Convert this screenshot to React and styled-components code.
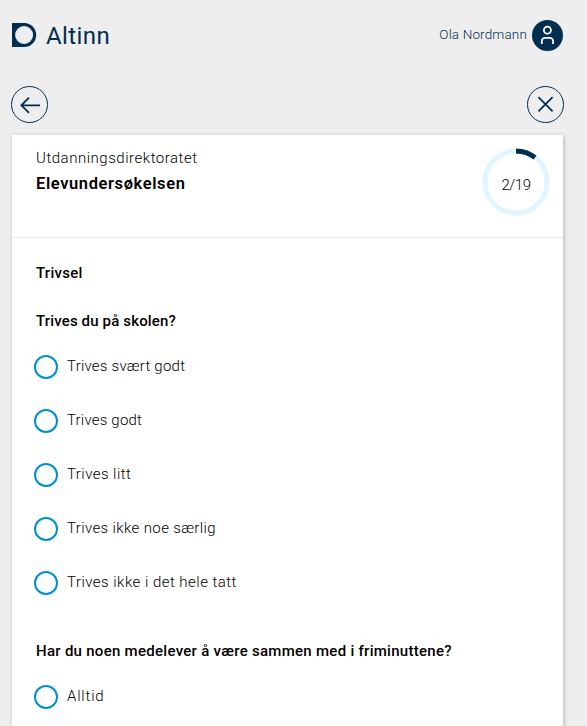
import React from 'react';
import styled, { createGlobalStyle } from 'styled-components';

const navy = '#022f51';

const GlobalStyle = createGlobalStyle`
  * { box-sizing: border-box; }
  html { overflow: hidden; }
  body { margin: 0; background: #eee; font-family: Roboto, "Liberation Sans", sans-serif; color: #000; }
  h1, h2, h3, p, fieldset { margin: 0; padding: 0; border: 0; }
  svg { display: block; flex: none; }
`;

const Page = styled.div`
  width: 587px;
  height: 726px;
  padding: 0 24px 0 12px;
  overflow: hidden;
`;

const TopBar = styled.header`
  display: flex;
  align-items: center;
  justify-content: space-between;
  height: 71px;
  color: ${navy};
`;

const Brand = styled.div`
  display: flex;
  align-items: center;
  gap: 9px;
  height: 26px;
  margin-bottom: 1px;
`;

const BrandName = styled.span`
  font-size: 24px;
  line-height: 26px;
  letter-spacing: ${p => p.$track}px;
  padding-top: 1px;
`;

const User = styled.div`
  display: flex;
  align-items: center;
  gap: 5px;
`;

const UserName = styled.span`
  font-size: 13.5px;
  font-weight: 300;
  line-height: 20px;
  padding-bottom: 3px;
  letter-spacing: ${p => p.$track}px;
`;

const NavBar = styled.nav`
  display: flex;
  justify-content: space-between;
  height: 64px;
  padding-top: 15px;
  margin: 0 -1px;
`;

const RoundButton = styled.button`
  display: flex;
  align-items: center;
  justify-content: center;
  width: 37px;
  height: 37px;
  padding: 0;
  border: 1px solid ${navy};
  border-radius: 50%;
  background: transparent;
`;

const Card = styled.main`
  width: 551px;
  height: 620px;
  background: #fff;
  box-shadow: 1px 1px 4px rgba(0, 0, 0, 0.25);
`;

const CardHeader = styled.div`
  display: flex;
  justify-content: space-between;
  height: 103px;
  padding: 13px 13px 0 24px;
  border-bottom: 1px solid #e9e9e9;
`;

const Owner = styled.p`
  font-size: 15px;
  font-weight: 300;
  line-height: 20px;
  white-space: nowrap;
  letter-spacing: ${p => p.$track}px;
`;

const Title = styled.h1`
  margin-top: 5px;
  font-size: 16.5px;
  font-weight: 600;
  line-height: 21px;
  white-space: nowrap;
  letter-spacing: ${p => p.$track}px;
`;

const Progress = styled.div`
  display: grid;
  width: 68px;
  height: 68px;
  place-items: center;
  > * { grid-area: 1 / 1; }
`;

const ProgressText = styled.span`
  font-size: 15px;
  font-weight: 300;
  line-height: 20px;
  padding-top: 5px;
  letter-spacing: ${p => p.$track}px;
`;

const Body = styled.div`
  padding: 25px 24px 0 22px;
`;

const Heading = styled.h2`
  padding-left: 2px;
  font-size: 15px;
  font-weight: 500;
  line-height: 20px;
  white-space: nowrap;
  letter-spacing: ${p => p.$track}px;
`;

const Question = styled.fieldset`
  margin-top: 28px;
`;

const Options = styled.div`
  display: grid;
  gap: 30px;
  padding: 24px 0 18px;
`;

const Option = styled.label`
  display: flex;
  gap: 9px;
  height: 24px;
  font-size: 15px;
  font-weight: 300;
  line-height: 22px;
  white-space: nowrap;
  letter-spacing: ${p => p.$track}px;
`;

const Radio = styled.input.attrs({ type: 'radio' })`
  appearance: none;
  flex: none;
  width: 24px;
  height: 24px;
  margin: 0;
  border: 2px solid #008fd6;
  border-radius: 50%;
  background: #fff;
`;

const QUESTIONS = [
  {
    text: 'Trives du på skolen?',
    track: 0.15,
    options: [
      ['Trives svært godt', 0.23],
      ['Trives godt', 0.2],
      ['Trives litt', 0.45],
      ['Trives ikke noe særlig', 0.37],
      ['Trives ikke i det hele tatt', 0.47],
    ],
  },
  {
    text: 'Har du noen medelever å være sammen med i friminuttene?',
    track: 0.28,
    options: [['Alltid', 0.8]],
  },
];

const Logo = () => (
  <svg width="25" height="24" viewBox="0 0 25 24">
    <path fill={navy} fillRule="evenodd" d="M0 0h12.2a12 12 0 0 1 0 24H0zM12.1 3a9 9 0 1 0 0 18a9 9 0 0 0 0-18z" />
  </svg>
);

const Avatar = () => (
  <svg width="31" height="31" viewBox="0 0 31 31" fill="none" stroke="#fff" strokeWidth="1.8">
    <circle cx="15.5" cy="15.5" r="15.5" fill={navy} stroke="none" />
    <circle cx="15.4" cy="10.2" r="3.5" />
    <path d="M9.8 24v-2.8a3.3 3.3 0 0 1 3.3-3.3h4.7a3.3 3.3 0 0 1 3.3 3.3V24" />
  </svg>
);

const BackIcon = () => (
  <svg width="35" height="35" viewBox="0 0 35 35" fill="none" stroke={navy} strokeWidth="1.8">
    <path d="M28 18.3H9.5M17 10.7l-7.6 7.6 7.6 7.6" />
  </svg>
);

const CloseIcon = () => (
  <svg width="35" height="35" viewBox="0 0 35 35" fill="none" stroke={navy} strokeWidth="1.8">
    <path d="M10.4 10.2l14.2 14.2M24.6 10.2L10.4 24.4" />
  </svg>
);

const Ring = () => (
  <svg width="68" height="68" viewBox="0 0 68 68" fill="none" strokeWidth="5">
    <circle cx="34" cy="34" r="31" stroke="#e1f5fe" />
    <path d="M34 3a31 31 0 0 1 19.04 6.54" stroke={navy} />
  </svg>
);

export default function App() {
  return (
    <>
      <GlobalStyle />
      <Page>
        <TopBar>
          <Brand>
            <Logo />
            <BrandName $track={0.4}>Altinn</BrandName>
          </Brand>
          <User>
            <UserName $track={0.15}>Ola Nordmann</UserName>
            <Avatar />
          </User>
        </TopBar>
        <NavBar>
          <RoundButton aria-label="Tilbake"><BackIcon /></RoundButton>
          <RoundButton aria-label="Lukk"><CloseIcon /></RoundButton>
        </NavBar>
        <Card>
          <CardHeader>
            <div>
              <Owner $track={0.52}>Utdanningsdirektoratet</Owner>
              <Title $track={0.6}>Elevundersøkelsen</Title>
            </div>
            <Progress>
              <Ring />
              <ProgressText $track={-0.5}>2/19</ProgressText>
            </Progress>
          </CardHeader>
          <Body>
            <Heading $track={0.25}>Trivsel</Heading>
            {QUESTIONS.map(q => (
              <Question key={q.text}>
                <Heading as="h3" $track={q.track}>{q.text}</Heading>
                <Options>
                  {q.options.map(([label, track]) => (
                    <Option key={label} $track={track}>
                      <Radio name={q.text} />
                      {label}
                    </Option>
                  ))}
                </Options>
              </Question>
            ))}
          </Body>
        </Card>
      </Page>
    </>
  );
}
